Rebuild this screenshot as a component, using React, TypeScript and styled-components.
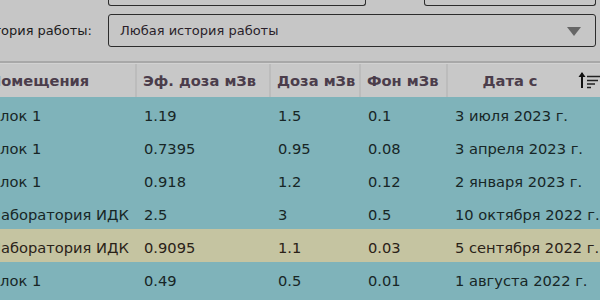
import React from "react";
import styled, { createGlobalStyle } from "styled-components";

const Global = createGlobalStyle`
  html, body { margin: 0; padding: 0; }
  body { width: 600px; height: 300px; overflow: hidden; background: #c6c6c6; font-family: "DejaVu Sans", Verdana, sans-serif; }
`;

const Page = styled.div`
  width: 600px;
  height: 300px;
  overflow: hidden;
  background: #c6c6c6;
  display: flex;
  flex-direction: column;
  & > * { flex-shrink: 0; }
`;

const Filters = styled.div`
  height: 61px;
  display: flex;
  flex-direction: column;
  gap: 8px;
  padding-right: 4px;
`;

const TopRow = styled.div`
  display: grid;
  grid-template-columns: 108px 258px 58px 172px;
  height: 6px;
  flex-shrink: 0;
`;

const CutBox = styled.div<{ $col: number }>`
  grid-column: ${(p) => p.$col};
  border: 1px solid #2c2c2c;
  border-top: none;
  border-radius: 0 0 3px 3px;
`;

const FieldRow = styled.div`
  display: grid;
  grid-template-columns: 92px 16px 1fr;
  align-items: center;
  height: 33px;
  flex-shrink: 0;
`;

const Label = styled.div`
  grid-column: 1;
  font-size: 13px;
  color: #1c1c1c;
  white-space: nowrap;
  overflow: hidden;
  display: flex;
  justify-content: flex-end;
`;

const Combo = styled.div`
  grid-column: 3;
  height: 100%;
  box-sizing: border-box;
  border: 1px solid #2c2c2c;
  border-radius: 3px;
  display: flex;
  align-items: center;
  justify-content: space-between;
  padding: 0 14px 0 11px;
  font-size: 13px;
  color: #2a1f2a;
`;

const Arrow = styled.div`
  width: 0;
  height: 0;
  border-left: 7px solid transparent;
  border-right: 7px solid transparent;
  border-top: 9px solid #666666;
  margin-top: 1px;
`;

const Divider = styled.div`
  height: 2px;
  background: #a8a8a8;
  border-bottom: 1px solid #d2d2d2;
`;

const Table = styled.div`
  margin-left: -17px;
  display: grid;
  grid-template-columns: 154px 134px 90px 87px 152px;
`;

const HeadCell = styled.div<{ $center?: boolean; $last?: boolean }>`
  height: 33px;
  box-sizing: border-box;
  display: flex;
  align-items: center;
  justify-content: ${(p) => (p.$center ? "center" : "flex-start")};
  padding-left: ${(p) => (p.$center ? "0" : "6px")};
  padding-right: ${(p) => (p.$last ? "28px" : "0")};
  background: #c8c8c8;
  border-right: ${(p) => (p.$last ? "none" : "2px solid #bcbcbc")};
  font-weight: bold;
  font-size: 14.67px;
  color: #4b3d4b;
  white-space: nowrap;
  position: relative;
`;

const SortIcon = styled.svg`
  position: absolute;
  left: 130px;
  top: 7px;
`;

const Cell = styled.div<{ $hl?: boolean }>`
  height: 33px;
  box-sizing: border-box;
  display: flex;
  align-items: center;
  padding: 4px 0 0 7px;
  background: ${(p) => (p.$hl ? "#c5c4a1" : "#7fb3ba")};
  font-size: 14.67px;
  color: ${(p) => (p.$hl ? "#2a2218" : "#172626")};
  white-space: nowrap;
  overflow: hidden;
`;

const rows = [
  ["Блок 1", "1.19", "1.5", "0.1", "3 июля 2023 г."],
  ["Блок 1", "0.7395", "0.95", "0.08", "3 апреля 2023 г."],
  ["Блок 1", "0.918", "1.2", "0.12", "2 января 2023 г."],
  ["Лаборатория ИДК", "2.5", "3", "0.5", "10 октября 2022 г."],
  ["Лаборатория ИДК", "0.9095", "1.1", "0.03", "5 сентября 2022 г."],
  ["Блок 1", "0.49", "0.5", "0.01", "1 августа 2022 г."],
  ["", "", "", "", ""],
];

export default function App() {
  return (
    <Page>
      <Global />
      <Filters>
        <TopRow>
          <CutBox $col={2} />
          <CutBox $col={4} />
        </TopRow>
        <FieldRow>
          <Label>История работы:</Label>
          <Combo>
            <span>Любая история работы</span>
            <Arrow />
          </Combo>
        </FieldRow>
      </Filters>
      <Divider />
      <Table>
        <HeadCell>Помещения</HeadCell>
        <HeadCell>Эф. доза мЗв</HeadCell>
        <HeadCell>Доза мЗв</HeadCell>
        <HeadCell>Фон мЗв</HeadCell>
        <HeadCell $center $last>
          Дата с
          <SortIcon width="22" height="18" viewBox="0 0 22 18">
            <path d="M4 17V2" stroke="#111" strokeWidth="2" fill="none" />
            <path d="M0.5 6L4 1l3.5 5z" fill="#111" />
            <path d="M9 5.5h13M9 9.5h11M9 13h8M9 16.5h4" stroke="#222" strokeWidth="1.6" fill="none" />
          </SortIcon>
        </HeadCell>
        {rows.map((r, i) =>
          r.map((c, j) => (
            <Cell key={`${i}-${j}`} $hl={i === 4}>
              {c}
            </Cell>
          ))
        )}
      </Table>
    </Page>
  );
}
